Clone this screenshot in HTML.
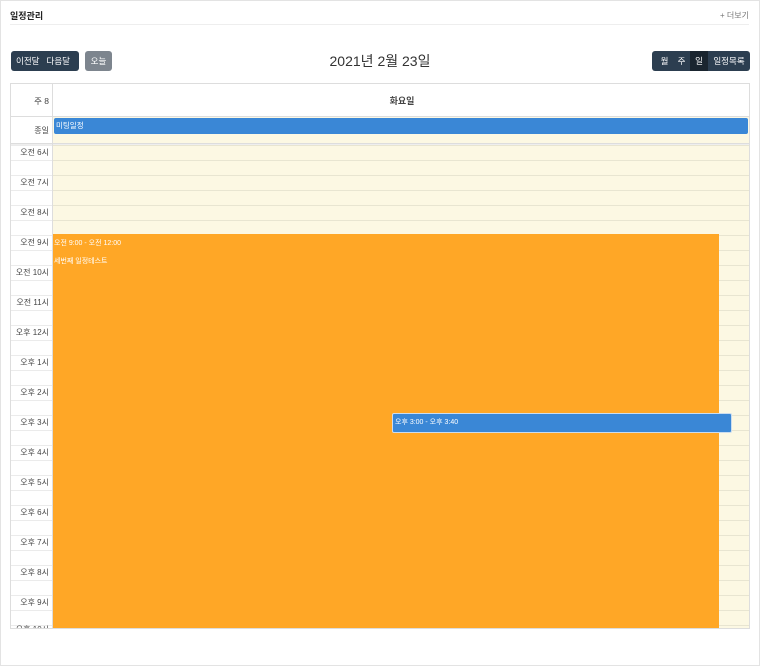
<!DOCTYPE html>
<html><head><meta charset="utf-8"><style>
*{box-sizing:border-box;margin:0;padding:0}
body{width:760px;height:666px;background:#fff;font-family:"Liberation Sans","Noto Sans CJK KR",sans-serif;position:relative;overflow:hidden;box-shadow:inset 0 0 0 1px #e3e3e3}
.abs{position:absolute}
.t{left:10px;top:9px;font-size:9px;font-weight:bold;color:#222}
.more{right:11px;top:10px;font-size:8px;color:#777}
.hl{left:10px;top:24px;width:739px;height:1px;background:#eee}
.btn{height:20px;top:51px;font-size:8.5px;color:#fff;border-radius:3px;line-height:20px;text-align:center}
.title{left:0;width:760px;top:51px;text-align:center;font-size:14px;color:#333}
.cal{left:10px;top:83px;width:740px;height:546px;border:1px solid #ddd;overflow:hidden}
.lbl{font-size:8px;color:#444;text-align:right;width:38px;left:0}
</style></head><body>
<div class="abs t">일정관리</div>
<div class="abs more">+ 더보기</div>
<div class="abs hl"></div>
<div class="abs btn" style="left:11px;width:68px;background:#2c3e50;text-align:left;padding-left:5px">이전달&nbsp;&nbsp;&nbsp;다음달</div>
<div class="abs btn" style="left:85px;width:27px;background:#7d858e">오늘</div>
<div class="abs title">2021년 <b style="font-weight:normal">2</b>월 23일</div>
<div class="abs btn" style="left:652px;width:98px;background:#2c3e50;display:flex;overflow:hidden">
<span style="width:17px;margin-left:4px">월</span><span style="width:17px">주</span><span style="width:18px;background:#1a252f">일</span><span style="flex:1">일정목록</span></div>
<div class="abs cal">
<div class="abs lbl" style="top:11px;font-size:8.5px">주 8</div>
<div class="abs" style="left:42px;width:698px;top:10px;text-align:center;font-size:9px;font-weight:bold;color:#444">화요일</div>
<div class="abs" style="left:0;top:32px;width:740px;height:1px;background:#ddd"></div>
<div class="abs" style="left:42px;top:33px;width:698px;height:26px;background:#fcf8e3"></div>
<div class="abs lbl" style="top:41px">종일</div>
<div class="abs" style="left:43px;top:34px;width:694px;height:16px;background:#3a87d6;border-radius:2px;color:#fff;font-size:7.5px;line-height:16px;padding-left:2px">미팅일정</div>
<div class="abs" style="left:0;top:59px;width:740px;height:3px;background:#eee;border-top:1px solid #ddd"></div>
<div class="abs" style="left:0;top:61px;width:740px;height:500px;
background:linear-gradient(#fcf8e3,#fcf8e3) 42px 0/698px 100% no-repeat,#fff;"></div>
<div class="abs" style="left:0;top:61px;width:740px;height:500px;background:repeating-linear-gradient(rgba(0,0,0,.08) 0 1px,transparent 1px 15px)"></div>
<div class="abs" style="left:41px;top:0;width:1px;height:546px;background:#ddd"></div>
<div class="abs lbl" style="top:63px">오전 6시</div>
<div class="abs lbl" style="top:93px">오전 7시</div>
<div class="abs lbl" style="top:123px">오전 8시</div>
<div class="abs lbl" style="top:153px">오전 9시</div>
<div class="abs lbl" style="top:183px">오전 10시</div>
<div class="abs lbl" style="top:213px">오전 11시</div>
<div class="abs lbl" style="top:243px">오후 12시</div>
<div class="abs lbl" style="top:273px">오후 1시</div>
<div class="abs lbl" style="top:303px">오후 2시</div>
<div class="abs lbl" style="top:333px">오후 3시</div>
<div class="abs lbl" style="top:363px">오후 4시</div>
<div class="abs lbl" style="top:393px">오후 5시</div>
<div class="abs lbl" style="top:423px">오후 6시</div>
<div class="abs lbl" style="top:453px">오후 7시</div>
<div class="abs lbl" style="top:483px">오후 8시</div>
<div class="abs lbl" style="top:513px">오후 9시</div>
<div class="abs lbl" style="top:540px">오후 10시</div>
<div class="abs" style="left:42px;top:150px;width:666px;height:400px;background:#ffa726;color:#fff;font-size:7px;padding:4px 1px">오전 9:00 - 오전 12:00<br><div style="margin-top:8px">세번째 일정테스트</div></div>
<div class="abs" style="left:381px;top:329px;width:340px;height:20px;background:#3a87d6;border:1px solid #cde;border-radius:2px;color:#fff;font-size:7px;line-height:18px;padding-left:2px">오후 3:00 - 오후 3:40</div>
</div>
</body></html>
